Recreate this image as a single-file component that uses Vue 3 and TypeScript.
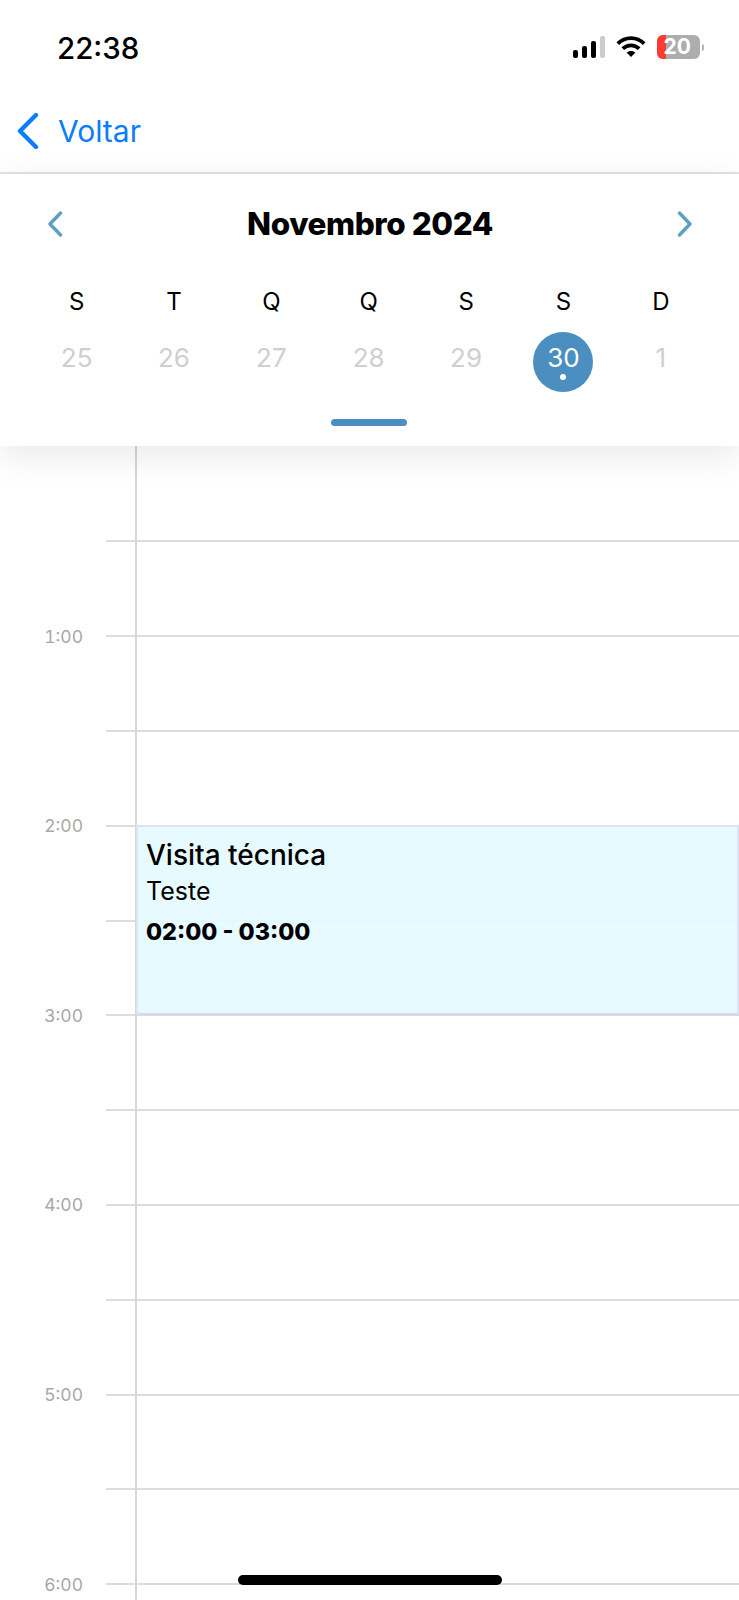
<template>
  <div class="screen">
    <!-- Status bar -->
    <div class="status-bar">
      <span class="clock">22:38</span>
      <div class="status-icons">
        <div class="signal">
          <span v-for="bar in signalBars" :key="bar.h" class="bar" :class="{ off: bar.off }" :style="{ height: bar.h + 'px' }"></span>
        </div>
        <svg class="wifi" width="30" height="22" viewBox="0 0 30 22">
          <path d="M1.8 8.6C9.2 1.2 20.8 1.2 28.2 8.6" fill="none" stroke="#000" stroke-width="3.8" />
          <path d="M6.8 13.6C11.6 9.2 18.4 9.2 23.2 13.6" fill="none" stroke="#000" stroke-width="3.8" />
          <path d="M10.6 17.6C13.2 15.4 16.8 15.4 19.4 17.6L15 22Z" fill="#000" />
        </svg>
        <div class="battery">
          <div class="battery-body">
            <span class="battery-low"></span>
            <span class="battery-text">20</span>
          </div>
          <span class="battery-nub"></span>
        </div>
      </div>
    </div>

    <!-- Nav -->
    <div class="nav">
      <svg width="24" height="38" viewBox="0 0 24 38">
        <path d="M20 3L4 19L20 35" fill="none" stroke="#0a7cff" stroke-width="4.4" stroke-linecap="round" stroke-linejoin="round" />
      </svg>
      <span class="nav-label">Voltar</span>
    </div>

    <!-- Calendar -->
    <div class="calendar">
      <div class="month-row">
        <svg width="16" height="26" viewBox="0 0 16 26">
          <path d="M13.5 2L3 13L13.5 24" fill="none" stroke="#5f9fc6" stroke-width="3.4" stroke-linecap="round" stroke-linejoin="round" />
        </svg>
        <span class="month">Novembro 2024</span>
        <svg width="16" height="26" viewBox="0 0 16 26">
          <path d="M2.5 2L13 13L2.5 24" fill="none" stroke="#5f9fc6" stroke-width="3.4" stroke-linecap="round" stroke-linejoin="round" />
        </svg>
      </div>
      <div class="week weekdays">
        <span v-for="(d, i) in weekdays" :key="i" class="weekday">{{ d }}</span>
      </div>
      <div class="week days">
        <div v-for="d in days" :key="d" class="day" :class="{ selected: d === selectedDay }">
          <span class="day-num">{{ d }}</span>
          <span v-if="d === selectedDay" class="day-dot"></span>
        </div>
      </div>
      <div class="handle"></div>
    </div>

    <!-- Agenda grid -->
    <div class="agenda">
      <div class="axis"></div>
      <div v-for="(row, i) in rows" :key="i" class="row">
        <span class="hour">{{ row }}</span>
        <span class="line"></span>
      </div>
      <div class="event">
        <div class="event-title">Visita técnica</div>
        <div class="event-sub">Teste</div>
        <div class="event-time">02:00 - 03:00</div>
      </div>
    </div>

    <div class="home-bar"></div>
  </div>
</template>

<script setup lang="ts">
const signalBars = [
  { h: 8, off: false },
  { h: 12, off: false },
  { h: 17, off: false },
  { h: 22, off: true }
];

const weekdays = ['S', 'T', 'Q', 'Q', 'S', 'S', 'D'];
const days = [25, 26, 27, 28, 29, 30, 1];
const selectedDay = 30;

// half hour rows, only the full hours carry a label
const rows = ['', '1:00', '', '2:00', '', '3:00', '', '4:00', '', '5:00', '', '6:00'];
</script>

<style>
html,
body {
  margin: 0;
  background: #fff;
}
</style>

<style scoped>
.screen {
  position: relative;
  width: 739px;
  height: 1600px;
  overflow: hidden;
  background: #fff;
  font-family: Inter, "Liberation Sans", sans-serif;
}

.status-bar {
  height: 94px;
  display: flex;
  justify-content: space-between;
  align-items: flex-start;
  padding: 0 35px 0 57px;
}

.clock {
  margin-top: 30px;
  font-size: 29.5px;
  line-height: 36px;
  font-weight: 500;
  color: #000;
}

.status-icons {
  display: flex;
  align-items: flex-start;
  margin-top: 35px;
}

.signal {
  display: flex;
  align-items: flex-end;
  gap: 3.5px;
  height: 23px;
  margin-right: 11px;
}

.bar {
  width: 5.5px;
  background: #000;
  border-radius: 2px;
}

.bar.off {
  background: #ccc;
}

.wifi {
  margin-right: 11px;
}

.battery {
  display: flex;
  align-items: center;
}

.battery-body {
  position: relative;
  width: 43px;
  height: 24px;
  border-radius: 6px;
  background: #adadad;
  overflow: hidden;
  display: flex;
  align-items: center;
  justify-content: flex-end;
  padding-right: 9px;
  box-sizing: border-box;
}

.battery-low {
  position: absolute;
  left: 0;
  top: 0;
  bottom: 0;
  width: 9px;
  background: #ff3b30;
}

.battery-text {
  position: relative;
  font-size: 21px;
  font-weight: 700;
  color: #fff;
  line-height: 24px;
}

.battery-nub {
  width: 2px;
  height: 7px;
  margin-left: 2px;
  background: #b5b5b5;
  border-radius: 0 2px 2px 0;
}

.nav {
  height: 80px;
  box-sizing: border-box;
  display: flex;
  align-items: center;
  padding: 0 0 4px 16px;
  border-bottom: 2px solid #e2e2e2;
}

.nav-label {
  margin-left: 18px;
  font-size: 30px;
  line-height: 36px;
  color: #0a7cff;
}

.calendar {
  position: relative;
  z-index: 2;
  height: 272px;
  box-sizing: border-box;
  padding: 32px 29.5px 0 28px;
  background: #fff;
  box-shadow: 0 10px 34px rgba(0, 0, 0, 0.09);
}

.month-row {
  display: flex;
  justify-content: space-between;
  align-items: center;
  height: 36px;
  padding: 0 16.5px 0 19px;
}

.month {
  font-size: 31.4px;
  line-height: 36px;
  font-weight: 800;
  letter-spacing: -0.4px;
  color: #000;
}

.week {
  display: grid;
  grid-template-columns: repeat(7, 1fr);
  justify-items: center;
}

.weekdays {
  margin-top: 45px;
}

.weekday {
  font-size: 24px;
  line-height: 30px;
  color: #000;
}

.days {
  margin-top: 15px;
}

.day {
  position: relative;
  width: 60px;
  height: 60px;
  border-radius: 50%;
  display: flex;
  justify-content: center;
}

.day-num {
  margin-top: 10px;
  font-size: 26px;
  line-height: 32px;
  color: #cfcfcf;
}

.day.selected {
  background: #4a8fc0;
}

.day.selected .day-num {
  color: #fff;
}

.day-dot {
  position: absolute;
  left: 27px;
  top: 42px;
  width: 6px;
  height: 6px;
  border-radius: 50%;
  background: #fff;
}

.handle {
  width: 76px;
  height: 7px;
  margin: 27px auto 0;
  border-radius: 4px;
  background: #4a8fc0;
}

.agenda {
  position: relative;
  padding-top: 48px;
}

.axis {
  position: absolute;
  left: 135px;
  top: 0;
  bottom: 0;
  width: 2px;
  background: #d6d6d6;
}

.row {
  height: 94.8px;
  display: flex;
  align-items: center;
}

.hour {
  width: 83px;
  margin-right: 23px;
  padding-top: 1px;
  text-align: right;
  font-size: 17.5px;
  line-height: 22px;
  font-feature-settings: "tnum";
  color: #a8a8a8;
}

.line {
  flex: 1;
  height: 2px;
  background: #dcdcdc;
}

.event {
  position: absolute;
  left: 136px;
  right: 0;
  top: 379px;
  height: 190px;
  box-sizing: border-box;
  padding: 12px 0 0 8px;
  border: 2px solid #dbe4f5;
  border-bottom-color: #d5d9e8;
  background: rgba(229, 250, 255, 0.93);
  color: #000;
}

.event-title {
  font-size: 28px;
  line-height: 32px;
  font-weight: 500;
}

.event-sub {
  font-size: 25px;
  line-height: 34px;
  margin-top: 3px;
}

.event-time {
  margin-top: 7px;
  font-size: 23.3px;
  line-height: 34px;
  font-weight: 800;
}

.home-bar {
  position: absolute;
  left: 238px;
  top: 1575px;
  width: 264px;
  height: 10px;
  border-radius: 5px;
  background: #000;
}
</style>
